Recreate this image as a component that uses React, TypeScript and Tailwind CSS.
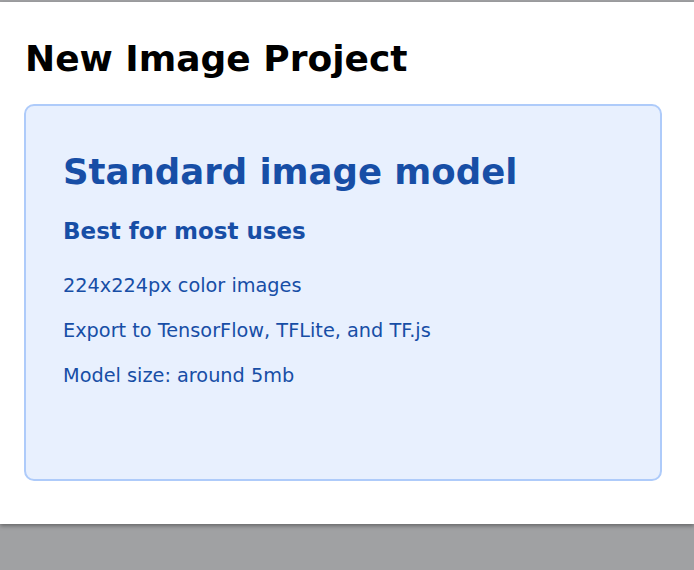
export default function App() {
  return (
    <div className="h-[570px] w-[694px] overflow-hidden bg-[#a0a1a3] pt-[2px] font-['DejaVu_Sans',sans-serif]">
      <div className="h-[522px] bg-white pl-[24px] pr-[32px] pt-[39px] shadow-[0_2px_4px_rgba(0,0,0,0.35)]">
        <h1 className="pl-[1px] text-[36px] font-bold leading-none text-black">New Image Project</h1>
        <div className="mt-[27px] h-[377px] rounded-[10px] border-2 border-[#aecbfa] bg-[#e8f0fe] pl-[37px] pt-[48px] text-[#174ea6]">
          <div className="text-[35.5px] font-bold leading-none">Standard image model</div>
          <div className="mt-[30px] text-[23px] font-bold leading-none">Best for most uses</div>
          <div className="mt-[33px] flex flex-col gap-[25px] text-[19.3px] leading-[20px]">
            <div>224x224px color images</div>
            <div>Export to TensorFlow, TFLite, and TF.js</div>
            <div>Model size: around 5mb</div>
          </div>
        </div>
      </div>
    </div>
  );
}
